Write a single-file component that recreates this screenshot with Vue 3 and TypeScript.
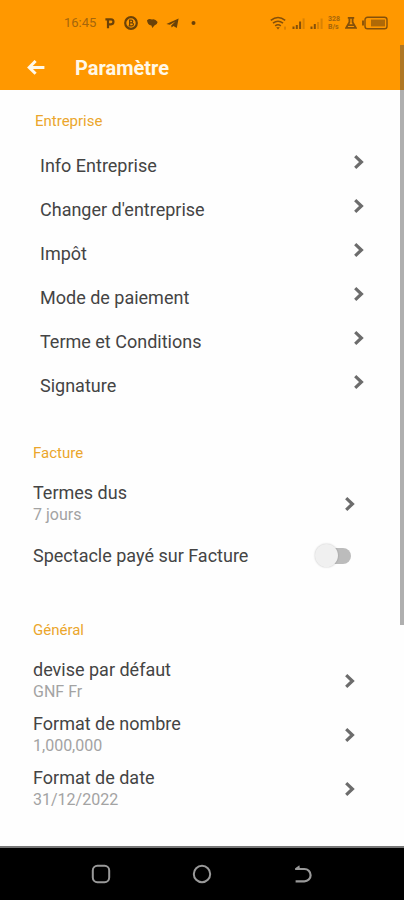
<script setup lang="ts">
import { ref } from 'vue'

interface Setting {
  label: string
  value?: string
}

const company: Setting[] = [
  { label: 'Info Entreprise' },
  { label: "Changer d'entreprise" },
  { label: 'Impôt' },
  { label: 'Mode de paiement' },
  { label: 'Terme et Conditions' },
  { label: 'Signature' },
]

const invoice: Setting[] = [{ label: 'Termes dus', value: '7 jours' }]

const general: Setting[] = [
  { label: 'devise par défaut', value: 'GNF Fr' },
  { label: 'Format de nombre', value: '1,000,000' },
  { label: 'Format de date', value: '31/12/2022' },
]

const showPaid = ref(false)
</script>

<template>
  <div class="screen">
    <header class="top">
      <div class="status">
        <div class="status-left">
          <span class="clock">16:45</span>
          <svg class="glyph" width="12" height="14" viewBox="0 0 12 14">
            <path d="M4 12.2V3.4h3a2.4 2.4 0 0 1 0 4.9H4M1.4 3.4H4" fill="none" stroke="currentColor" stroke-width="2.2" />
          </svg>
          <svg class="glyph" width="14" height="14" viewBox="0 0 14 14">
            <circle cx="7" cy="7" r="5.8" fill="none" stroke="currentColor" stroke-width="2.2" />
            <path d="M5.6 4.2h1.8a1.3 1.3 0 0 1 0 2.7H5.6zM5.6 6.9h2.4a1.4 1.4 0 0 1 0 2.9H4.6M5.6 4.2v5.6" fill="none" stroke="currentColor" stroke-width="1.2" />
          </svg>
          <svg class="glyph" width="12" height="14" viewBox="0 0 12 14">
            <path d="M1 4.2Q3.4 2.2 6 3.6Q9 2.4 11.6 6Q11.2 9 8.4 9.6L6.4 12L5.4 9.6Q1.4 9 1 4.2z" fill="currentColor" />
          </svg>
          <svg class="glyph" width="13" height="14" viewBox="0 0 13 14">
            <path d="M0.4 8L12.6 2.6L10.8 12L7.4 10L5.6 11.6L5.2 9.4L9.4 5.6L3.8 8.8z" fill="currentColor" />
          </svg>
          <svg class="glyph dot" width="5" height="14" viewBox="0 0 5 14">
            <circle cx="2.5" cy="7" r="2" fill="currentColor" />
          </svg>
        </div>
        <div class="status-right">
          <svg width="17" height="14" viewBox="0 0 17 14">
            <g fill="none" stroke="currentColor" stroke-width="1.6">
              <path d="M0.8 4.4Q8 -1.4 15.2 4.4" />
              <path d="M3 7.2Q8 3.2 13 7.2" />
              <path d="M5.2 9.8Q8 7.6 10.8 9.8" />
            </g>
            <path d="M6.2 11.2h3.6L8 13.4z" fill="currentColor" />
            <path d="M15 10.6v3" stroke="currentColor" opacity="0.6" />
          </svg>
          <svg width="13" height="14" viewBox="0 0 13 14">
            <path d="M1.5 13v-2.4M4.8 13V9M8.1 13V5.4" stroke="currentColor" stroke-width="2" />
            <path d="M11.6 13V2.4" stroke="currentColor" stroke-width="2" opacity="0.3" />
          </svg>
          <svg width="13" height="14" viewBox="0 0 13 14">
            <path d="M1.5 13v-2.4M4.8 13V8" stroke="currentColor" stroke-width="2" />
            <path d="M8.1 13V6M11.6 13V2.4" stroke="currentColor" stroke-width="2" opacity="0.3" />
          </svg>
          <div class="rate"><span>328</span><span>B/s</span></div>
          <svg width="12" height="14" viewBox="0 0 12 14">
            <path d="M2.8 1.8h6.4M4.4 2v4.2L1.2 11.8h9.6L7.6 6.2V2M3.8 9.2h4.4" fill="none" stroke="currentColor" stroke-width="1.8" />
          </svg>
          <svg width="26" height="14" viewBox="0 0 26 14">
            <rect x="3" y="1.2" width="22" height="11.6" rx="2.6" fill="none" stroke="currentColor" stroke-width="1.4" />
            <path d="M1 4.6v5" stroke="currentColor" stroke-width="1.8" />
            <rect x="9" y="3.6" width="14" height="6.8" fill="currentColor" opacity="0.65" />
          </svg>
        </div>
      </div>
      <div class="bar">
        <button class="back" type="button" aria-label="Retour">
          <svg width="18" height="16" viewBox="0 0 18 16">
            <path d="M17.4 7.4H2.6M8.6 1L2.2 7.4l6.4 6.4" fill="none" stroke="currentColor" stroke-width="3" />
          </svg>
        </button>
        <h1>Paramètre</h1>
      </div>
    </header>

    <main class="content">
      <section class="company">
        <h2>Entreprise</h2>
        <button v-for="item in company" :key="item.label" class="row" type="button">
          <span class="label">{{ item.label }}</span>
          <svg class="chevron" width="12" height="16" viewBox="0 0 12 16">
            <path d="M2.2 2.2L8.4 8l-6.2 5.8" fill="none" stroke="currentColor" stroke-width="3.2" />
          </svg>
        </button>
      </section>

      <section>
        <h2>Facture</h2>
        <button v-for="item in invoice" :key="item.label" class="row" type="button">
          <span class="texts">
            <span class="label">{{ item.label }}</span>
            <span class="value">{{ item.value }}</span>
          </span>
          <svg class="chevron" width="12" height="16" viewBox="0 0 12 16">
            <path d="M2.2 2.2L8.4 8l-6.2 5.8" fill="none" stroke="currentColor" stroke-width="3.2" />
          </svg>
        </button>
        <div class="row switch-row">
          <label class="label" for="show-paid">Spectacle payé sur Facture</label>
          <input id="show-paid" v-model="showPaid" class="switch" type="checkbox" role="switch" />
        </div>
      </section>

      <section>
        <h2>Général</h2>
        <button v-for="item in general" :key="item.label" class="row" type="button">
          <span class="texts">
            <span class="label">{{ item.label }}</span>
            <span class="value">{{ item.value }}</span>
          </span>
          <svg class="chevron" width="12" height="16" viewBox="0 0 12 16">
            <path d="M2.2 2.2L8.4 8l-6.2 5.8" fill="none" stroke="currentColor" stroke-width="3.2" />
          </svg>
        </button>
      </section>
    </main>

    <nav class="system">
      <button type="button" aria-label="Applications récentes">
        <svg width="20" height="20" viewBox="0 0 20 20">
          <rect x="1.8" y="1.8" width="16.4" height="16.4" rx="4.6" fill="none" stroke="currentColor" stroke-width="2" />
        </svg>
      </button>
      <button type="button" aria-label="Accueil">
        <svg width="20" height="20" viewBox="0 0 20 20">
          <circle cx="10" cy="10" r="8.2" fill="none" stroke="currentColor" stroke-width="2" />
        </svg>
      </button>
      <button type="button" aria-label="Précédent">
        <svg width="20" height="20" viewBox="0 0 20 20">
          <path d="M2.6 5h8.8a6.2 6.2 0 0 1 0 12.4H2.6" fill="none" stroke="currentColor" stroke-width="2.2" />
          <path d="M2.2 6V4.2L6.4 1.2L7 6z" fill="currentColor" />
        </svg>
      </button>
    </nav>

    <div class="scrollbar" aria-hidden="true"></div>
  </div>
</template>

<style>
body {
  margin: 0;
  background: #fefefe;
}
</style>

<style scoped>
.screen {
  position: relative;
  display: flex;
  flex-direction: column;
  min-height: 100vh;
  font-family: Roboto, 'Liberation Sans', sans-serif;
  color: #444;
  background: #fefefe;
}

svg {
  display: block;
  flex: none;
}

button {
  padding: 0;
  border: 0;
  background: none;
  font: inherit;
  color: inherit;
  text-align: left;
  cursor: pointer;
}

.top {
  background: #ff9800;
}

.status {
  display: flex;
  align-items: center;
  justify-content: space-between;
  height: 46px;
  padding: 0 16px 0 64px;
  color: #84500a;
}

.status-left {
  display: flex;
  align-items: center;
  gap: 8px;
}

.status-right {
  display: flex;
  align-items: center;
  gap: 5px;
}

.clock {
  font-size: 13px;
  line-height: 16px;
  color: #a5660c;
}

.glyph {
  color: #6b4208;
}

.dot {
  margin-left: 4px;
}

.rate {
  display: flex;
  flex-direction: column;
  font-size: 7px;
  font-weight: 700;
  line-height: 8px;
  color: #a5660c;
}

.bar {
  display: flex;
  align-items: center;
  gap: 30px;
  height: 44px;
  padding: 0 27px;
  color: #fff8e8;
}

.bar h1 {
  margin: 0;
  font-size: 20px;
  font-weight: 700;
  line-height: 24px;
}

.content {
  flex: 1;
  padding: 21px 48px 30px 33px;
}

section + section {
  margin-top: 39px;
}

h2 {
  margin: 0 0 14px;
  font-size: 15px;
  font-weight: 400;
  line-height: 20px;
  color: #eba62c;
}

.row {
  display: flex;
  align-items: center;
  justify-content: space-between;
  width: 100%;
  height: 54px;
}

.texts {
  display: flex;
  flex-direction: column;
}

.label {
  font-size: 18px;
  line-height: 22px;
}

.value {
  font-size: 16px;
  line-height: 22px;
  color: #a3a3a3;
}

.chevron {
  color: #6c6c6c;
}

.company {
  margin-right: -9px;
}

.company h2 {
  margin-bottom: 9px;
  padding-left: 2px;
}

.company .row {
  height: 44px;
  padding-left: 7px;
}

.company .label {
  padding-top: 8px;
}

.switch-row {
  height: 50px;
  padding-right: 5px;
  box-sizing: border-box;
}

.switch {
  position: relative;
  flex: none;
  width: 36px;
  height: 24px;
  margin: 0;
  appearance: none;
  cursor: pointer;
}

.switch::before {
  content: '';
  position: absolute;
  inset: 4px 0 4px 4px;
  border-radius: 8px;
  background: #bcbcbc;
}

.switch::after {
  content: '';
  position: absolute;
  top: 0;
  left: 0;
  width: 23px;
  height: 23px;
  border-radius: 50%;
  background: #f0f0f0;
  box-shadow: 0 0 2px rgba(0, 0, 0, 0.25);
}

.switch:checked::before {
  background: #ffcc80;
}

.switch:checked::after {
  left: 13px;
  background: #ff9800;
}

.system {
  display: flex;
  align-items: center;
  justify-content: space-evenly;
  height: 52px;
  padding: 0 10px;
  border-top: 2px solid #777;
  background: #000;
  color: #999;
}

.scrollbar {
  position: absolute;
  top: 45px;
  right: 0;
  width: 4px;
  height: 580px;
  background: rgba(80, 80, 80, 0.45);
}
</style>
